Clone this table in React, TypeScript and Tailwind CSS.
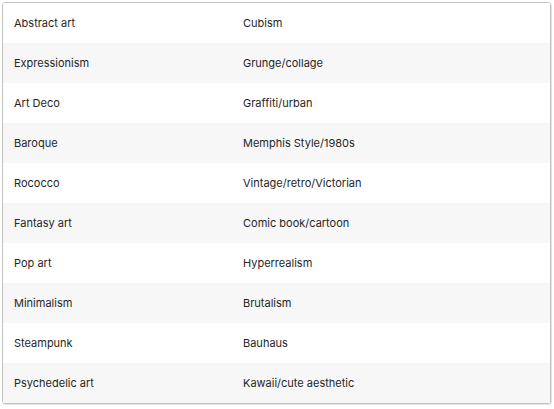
import React from 'react';

const rows: [string, string][] = [
  ['Abstract art', 'Cubism'],
  ['Expressionism', 'Grunge/collage'],
  ['Art Deco', 'Graffiti/urban'],
  ['Baroque', 'Memphis Style/1980s'],
  ['Rococco', 'Vintage/retro/Victorian'],
  ['Fantasy art', 'Comic book/cartoon'],
  ['Pop art', 'Hyperrealism'],
  ['Minimalism', 'Brutalism'],
  ['Steampunk', 'Bauhaus'],
  ['Psychedelic art', 'Kawaii/cute aesthetic'],
];

const App: React.FC = () => {
  return (
    <div className="w-[554px] h-[409px] bg-white pt-[2px] pl-[2px] font-['Inter',sans-serif]">
      <div className="w-[549px] border border-[#c2c2c2] rounded-[3px] overflow-hidden shadow-[1px_1px_1px_rgba(0,0,0,0.12)]">
        {rows.map(([a, b], i) => (
          <div
            key={a}
            className={`grid grid-cols-[229px_1fr] h-10 items-center text-[11px] text-[#262626] ${
              i % 2 === 1 ? 'bg-[#f7f7f8]' : 'bg-white'
            }`}
          >
            <div className="pl-[11px]">{a}</div>
            <div className="pl-[11px]">{b}</div>
          </div>
        ))}
      </div>
    </div>
  );
};

export default App;
